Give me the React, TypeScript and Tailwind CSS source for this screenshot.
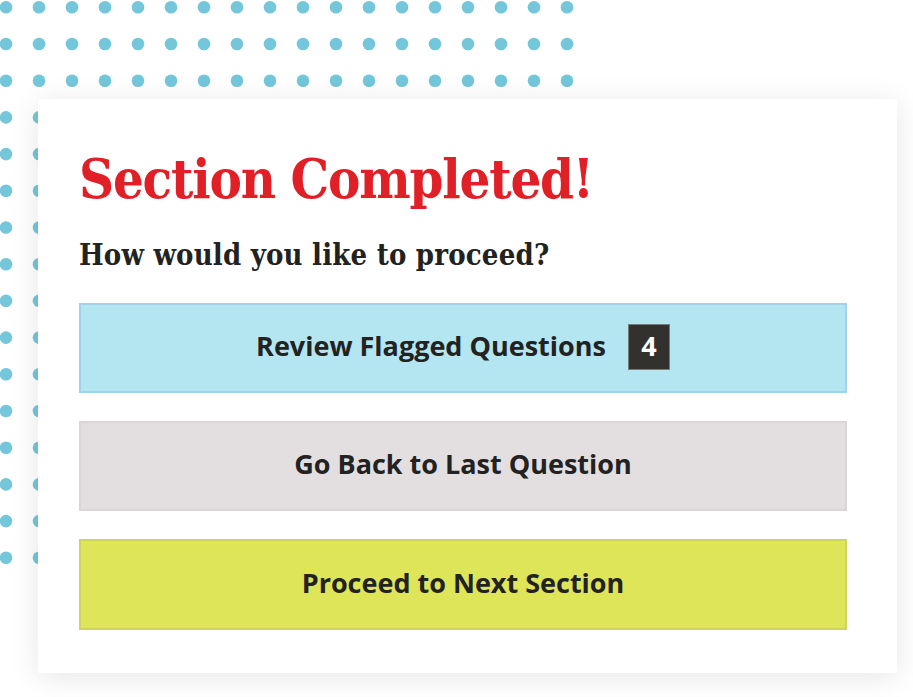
import React from "react";

function Dots() {
  const cols = Array.from({ length: 18 }, (_, i) => i);
  const rows = Array.from({ length: 16 }, (_, i) => i);
  return (
    <svg className="absolute left-0 top-0" width="600" height="580" viewBox="0 0 600 580">
      {rows.map((r) =>
        cols.map((c) => (
          <circle key={`${r}-${c}`} cx={6 + c * 33} cy={7.3 + r * 36.7} r="6.3" fill="#74c6da" />
        ))
      )}
    </svg>
  );
}

export default function App() {
  return (
    <div className="relative w-[913px] h-[697px] bg-white overflow-hidden">
      <Dots />
      <div className="relative pl-[38px] pt-[99px]">
        <div className="w-[859px] h-[574px] bg-white shadow-[0_4px_28px_rgba(0,0,0,0.10)] pl-[41px] pr-[50px] pt-[40px]">
          <h1
            className="text-[#e11f26] font-bold text-[54px] leading-[80px] tracking-[-1.2px]"
            style={{ fontFamily: '"DejaVu Serif Condensed", "DejaVu Serif", serif' }}
          >
            Section Completed!
          </h1>
          <h2
            className="mt-[18px] text-[#222222] font-bold text-[29px] leading-[36px] tracking-[0.2px]"
            style={{ fontFamily: '"DejaVu Serif Condensed", "DejaVu Serif", serif' }}
          >
            How would you like to proceed?
          </h2>
          <div className="mt-[30px] flex flex-col gap-[28px]" style={{ fontFamily: '"Open Sans", sans-serif' }}>
            <button className="h-[90px] w-full bg-[#b3e6f0] border-2 border-[#9fd3ec] flex items-center justify-center gap-[22px] text-[27px] font-bold text-[#222222] pb-[3px]">
              <span>Review Flagged Questions</span>
              <span className="w-[42px] h-[46px] bg-[#33312e] border border-[#7a7a7a] text-white flex items-center justify-center text-[27px]">4</span>
            </button>
            <button className="h-[90px] w-full bg-[#e3dfe0] border-2 border-[#d9d5d5] flex items-center justify-center text-[27px] font-bold text-[#222222] pb-[3px]">
              Go Back to Last Question
            </button>
            <button className="h-[91px] w-full bg-[#dee558] border-2 border-[#cfd55c] flex items-center justify-center text-[27px] font-bold text-[#222222] pb-[3px]">
              Proceed to Next Section
            </button>
          </div>
        </div>
      </div>
    </div>
  );
}
